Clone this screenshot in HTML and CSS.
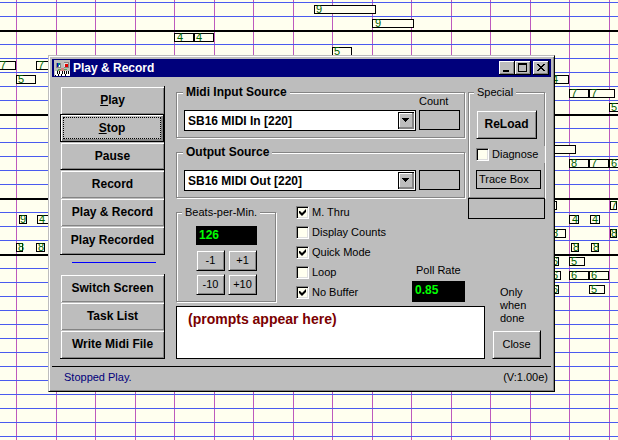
FILE: index.html
```html
<!DOCTYPE html>
<html lang="en">
<head>
    <meta charset="UTF-8">
    <meta name="viewport" content="width=device-width, initial-scale=1.0">
    <title>Play &amp; Record</title>
    <link rel="stylesheet" href="styles.css">
</head>
<body>
    <!-- piano roll -->
    <svg class="notes" aria-hidden="true">
        <g class="boxes">
            <rect x="314.5" y="5.5" width="61" height="8"/>
            <rect x="372.5" y="19.5" width="41" height="8"/>
            <rect x="174.5" y="33.5" width="19" height="8"/>
            <rect x="194.5" y="33.5" width="19" height="8"/>
            <rect x="332.5" y="47.5" width="19" height="8"/>
            <rect x="-4.5" y="61.5" width="20" height="8"/>
            <rect x="36.5" y="61.5" width="19" height="8"/>
            <rect x="16.5" y="75.5" width="19" height="8"/>
            <rect x="549.5" y="75.5" width="19" height="8"/>
            <rect x="569.5" y="89.5" width="19" height="8"/>
            <rect x="589.5" y="89.5" width="25" height="8"/>
            <rect x="609.5" y="103.5" width="19" height="8"/>
            <rect x="540.5" y="145.5" width="35" height="8"/>
            <rect x="569.5" y="159.5" width="19" height="8"/>
            <rect x="589.5" y="159.5" width="19" height="8"/>
            <rect x="609.5" y="159.5" width="19" height="8"/>
            <rect x="549.5" y="201.5" width="7" height="8"/>
            <rect x="610.5" y="201.5" width="6" height="8"/>
            <rect x="19.5" y="215.5" width="7" height="8"/>
            <rect x="37.5" y="215.5" width="19" height="8"/>
            <rect x="569.5" y="215.5" width="9" height="8"/>
            <rect x="590.5" y="215.5" width="9" height="8"/>
            <rect x="549.5" y="229.5" width="16" height="8"/>
            <rect x="610.5" y="229.5" width="6" height="8"/>
            <rect x="16.5" y="243.5" width="6" height="8"/>
            <rect x="36.5" y="243.5" width="8" height="8"/>
            <rect x="571.5" y="243.5" width="7" height="8"/>
            <rect x="591.5" y="243.5" width="7" height="8"/>
            <rect x="549.5" y="257.5" width="9" height="8"/>
            <rect x="569.5" y="257.5" width="15" height="8"/>
            <rect x="549.5" y="271.5" width="11" height="8"/>
            <rect x="569.5" y="271.5" width="19" height="8"/>
            <rect x="589.5" y="271.5" width="19" height="8"/>
            <rect x="549.5" y="285.5" width="9" height="8"/>
            <rect x="589.5" y="285.5" width="15" height="8"/>
        </g>
        <g class="digits">
            <text x="316" y="13">9</text>
            <text x="375" y="27">9</text>
            <text x="177" y="41">4</text>
            <text x="196" y="41">4</text>
            <text x="334" y="55">5</text>
            <text x="0" y="69">7</text>
            <text x="38" y="69">7</text>
            <text x="18" y="83">5</text>
            <text x="552" y="83">4</text>
            <text x="571" y="97">7</text>
            <text x="591" y="97">7</text>
            <text x="611" y="111">5</text>
            <text x="571" y="167">8</text>
            <text x="591" y="167">7</text>
            <text x="611" y="167">6</text>
            <text x="611" y="209">7</text>
            <text x="20" y="223">9</text>
            <text x="39" y="223">4</text>
            <text x="572" y="223">4</text>
            <text x="592" y="223">4</text>
            <text x="552" y="237">8</text>
            <text x="611" y="237">8</text>
            <text x="18" y="251">8</text>
            <text x="38" y="251">8</text>
            <text x="573" y="251">8</text>
            <text x="593" y="251">8</text>
            <text x="552" y="265">6</text>
            <text x="571" y="265">5</text>
            <text x="552" y="279">6</text>
            <text x="571" y="279">6</text>
            <text x="591" y="279">6</text>
            <text x="552" y="293">6</text>
            <text x="591" y="293">5</text>
        </g>
    </svg>

    <form class="window">
        <header class="titlebar">
            <svg class="app-icon" width="16" height="16" viewBox="0 0 16 16" shape-rendering="crispEdges" aria-hidden="true">
                <path fill="#bdbdbd" d="M0 0h16v16H0z"/>
                <path fill="#848484" d="M2 2h5v6H2zM9 2h6v6H9z"/>
                <path fill="#bdbdbd" d="M2 2h5v1H2zM9 2h1v6H9z"/>
                <path fill="#0000bd" d="M3 3h1v4H3z"/>
                <path fill="#008484" d="M4 3h2v3H4z"/>
                <path fill="#fff" d="M5 5h1v2H5z"/>
                <path fill="#dedede" d="M10 3h4v4h-4z"/>
                <path fill="#e00000" d="M11 4h3v3h-3z"/>
                <path fill="#5aa55a" d="M4 9h3v1H4zM10 9h3v1h-3zM3 10h2v1H3z"/>
                <path fill="#d08484" d="M7 8h3v2H7zM5 10h6v1H5z"/>
                <path fill="#fff" d="M1 11h15v5H1z"/>
                <path fill="#000" d="M3 11h1v3H3zM5 11h1v3H5zM8 11h1v3H8zM10 11h1v3h-1zM12 11h1v3h-1zM1 15h1v1H1zM4 14h1v2H4zM7 14h1v2H7zM11 14h1v2h-1zM14 11h1v3h-1z"/>
            </svg>
            <h1>Play &amp; Record</h1>
            <button type="button" class="caption" aria-label="Minimize">
                <svg width="12" height="10" shape-rendering="crispEdges"><path d="M2 7h6v2H2z"/></svg>
            </button>
            <button type="button" class="caption" aria-label="Maximize">
                <svg width="12" height="10" shape-rendering="crispEdges"><path fill-rule="evenodd" d="M1 0h9v9H1zM2 2v6h7V2z"/></svg>
            </button>
            <button type="button" class="caption close" aria-label="Close window">
                <svg width="12" height="10" shape-rendering="crispEdges"><path d="M2 1h2v1h1v1h2V2h1V1h2v1H9v1H8v1H7v1h1v1h1v1h1v1H8V7H7V6H5v1H4v1H2V7h1V6h1V5h1V4H4V3H3V2H2z"/></svg>
            </button>
        </header>

        <div class="client">
            <nav class="sidebar">
                <div class="stack">
                    <button type="button"><u>P</u>lay</button>
                    <button type="button" class="focused"><u>S</u>top</button>
                    <button type="button" class="last">Pause</button>
                    <button type="button">Record</button>
                    <button type="button">Play &amp; Record</button>
                    <button type="button">Play Recorded</button>
                </div>
                <hr>
                <div class="stack">
                    <button type="button">Switch Screen</button>
                    <button type="button">Task List</button>
                    <button type="button">Write Midi File</button>
                </div>
            </nav>

            <main class="main">
                <fieldset class="source">
                    <legend>Midi Input Source</legend>
                    <div class="source-row">
                        <select aria-label="Midi Input Source"><option>SB16 MIDI In [220]</option></select>
                        <div class="count">
                            <label for="inCount">Count</label>
                            <output id="inCount"></output>
                        </div>
                    </div>
                </fieldset>
                <fieldset class="source">
                    <legend>Output Source</legend>
                    <div class="source-row">
                        <select aria-label="Output Source"><option>SB16 MIDI Out [220]</option></select>
                        <div class="count"><output aria-label="Output count"></output></div>
                    </div>
                </fieldset>

                <div class="settings">
                    <fieldset class="beats">
                        <legend>Beats-per-Min.</legend>
                        <output class="led" aria-label="Beats per minute">126</output>
                        <div class="steps">
                            <button type="button">-1</button>
                            <button type="button">+1</button>
                            <button type="button">-10</button>
                            <button type="button">+10</button>
                        </div>
                    </fieldset>
                    <div class="options">
                        <label><input type="checkbox" checked>M. Thru</label>
                        <label><input type="checkbox">Display Counts</label>
                        <label><input type="checkbox" checked>Quick Mode</label>
                        <label><input type="checkbox">Loop</label>
                        <label><input type="checkbox" checked>No Buffer</label>
                    </div>
                    <div class="poll">
                        <label for="pollRate">Poll Rate</label>
                        <output class="led" id="pollRate">0.85</output>
                    </div>
                </div>

                <div class="prompts">(prompts appear here)</div>
            </main>

            <aside class="side">
                <fieldset class="special">
                    <legend>Special</legend>
                    <button type="button" class="reload">ReLoad</button>
                    <label class="diagnose"><input type="checkbox">Diagnose</label>
                    <div class="trace">Trace Box</div>
                </fieldset>
                <div class="blank"></div>
                <div class="done">
                    <p>Only<br>when<br>done</p>
                    <button type="button">Close</button>
                </div>
            </aside>
        </div>

        <footer class="status">
            <span class="message">Stopped Play.</span>
            <span>(V:1.00e)</span>
        </footer>
    </form>
</body>
</html>
```
FILE: styles.css
```css
* { box-sizing: border-box; }
body {
    margin: 0;
    min-height: 100vh;
    position: relative;
    overflow: hidden;
    font: 11px/13px "Liberation Sans", Arial, sans-serif;
    color: #000;
    background:
        linear-gradient(#000, #000) 0 30px / 100% 2px no-repeat,
        linear-gradient(#000, #000) 0 114px / 100% 2px no-repeat,
        linear-gradient(#000, #000) 0 198px / 100% 2px no-repeat,
        linear-gradient(#000, #000) 0 254px / 100% 2px no-repeat,
        repeating-linear-gradient(transparent 0 2px, #4a5aef 2px 3px, transparent 3px 14px),
        repeating-linear-gradient(90deg, transparent 0 16px, #bd5abd 16px 17px, transparent 17px 56px, #bd5abd 56px 57px, transparent 57px 79px),
        #ffffef;
}
h1, p, fieldset, legend { margin: 0; padding: 0; }
button { padding: 0; font: inherit; color: inherit; background: #bdbdbd; border: 0; border-radius: 0; }
output { display: block; }
svg { display: block; }

.notes { position: absolute; left: 0; top: 0; width: 100%; height: 100%; }
.boxes { fill: #ffffef; stroke: #000; }
.digits { fill: #006300; font: 11px "Liberation Sans", Arial, sans-serif; }

/* window frame */
.window {
    position: absolute;
    left: 48px;
    right: 63px;
    top: 55px;
    background: #bdbdbd;
    border: 1px solid;
    border-color: #bdbdbd #000 #000 #bdbdbd;
    box-shadow: inset 1px 1px #fff, inset -1px -1px #848484;
    padding: 3px;
}
.titlebar { display: flex; align-items: center; height: 18px; padding: 0 2px; background: #00007b; color: #fff; }
.titlebar h1 { flex: 1; margin-left: 3px; font-size: 12px; line-height: 18px; }
.caption {
    width: 16px;
    height: 14px;
    padding: 2px;
    color: #000;
    box-shadow: inset -1px -1px #000, inset 1px 1px #fff, inset -2px -2px #848484;
}
.caption.close { margin-left: 2px; }
.client { display: grid; grid-template-columns: 105px 1fr 77px; padding: 9px 6px 7px 8px; }

/* left buttons */
.stack { border: solid #000; border-width: 0 1px 1px 0; }
.stack button {
    display: block;
    width: 100%;
    height: 28px;
    font-size: 12px;
    font-weight: bold;
    border-left: 1px solid #bdbdbd;
    border-top: 1px solid #bdbdbd;
    box-shadow: inset 1px 1px #fff, inset -1px -1px #848484;
}
.stack .last { border-bottom: 1px solid #000; }
.stack .focused {
    border: 1px solid #000;
    outline: 1px dotted #000;
    outline-offset: -4px;
    box-shadow: inset 1px 1px #fff, inset -2px -2px #848484;
}
.sidebar hr { height: 1px; margin: 7px 9px 11px 12px; border: 0; background: #0000ff; }

/* group boxes */
fieldset { min-width: 0; border: 1px solid #848484; box-shadow: 1px 1px #fff, inset 1px 1px #fff; }
legend { margin-left: 6px; padding: 0 3px; line-height: 13px; background: #bdbdbd; white-space: nowrap; }
.main { display: flex; flex-direction: column; margin: 0 3px 0 11px; }
.source { margin-bottom: 8px; padding: 0 4px 6px 7px; }
.source legend { margin-left: -1px; font-size: 12px; font-weight: bold; }
.source-row { display: flex; align-items: flex-end; gap: 3px; min-height: 32px; }
.source select {
    flex: 1;
    min-width: 0;
    height: 21px;
    padding: 0 20px 0 3px;
    appearance: none;
    border: 1px solid #000;
    border-radius: 0;
    color: #000;
    font: bold 12px "Liberation Sans", Arial, sans-serif;
    background:
        linear-gradient(#000, #000) right 6px top 7px / 7px 1px no-repeat,
        linear-gradient(#000, #000) right 7px top 8px / 5px 1px no-repeat,
        linear-gradient(#000, #000) right 8px top 9px / 3px 1px no-repeat,
        linear-gradient(#000, #000) right 9px top 10px / 1px 1px no-repeat,
        linear-gradient(#bdbdbd, #bdbdbd) right 3px top 3px / 12px 13px no-repeat,
        linear-gradient(#fff, #fff) right 3px top 2px / 13px 14px no-repeat,
        linear-gradient(#848484, #848484) right 1px top 2px / 15px 16px no-repeat,
        linear-gradient(#000, #000) right 1px top 1px / 16px 17px no-repeat,
        #fff;
}
.count label { display: block; margin: -4px 0 2px; }
.count output { width: 41px; height: 20px; margin-bottom: 1px; border: 1px solid #000; }

.settings { display: flex; align-items: stretch; height: 96px; margin-bottom: 4px; }
.beats { width: 100px; padding: 0 18px 0 19px; }
.beats legend { margin-left: -14px; }
.led { padding-left: 3px; background: #000; color: #00ff00; font-size: 12px; font-weight: bold; }
.beats .led { height: 19px; margin-top: 7px; line-height: 18px; }
.steps { display: grid; grid-template-columns: 1fr 1fr; gap: 3px; margin-top: 5px; }
.steps button, .reload, .done button {
    border: 1px solid;
    border-color: #bdbdbd #000 #000 #bdbdbd;
    box-shadow: inset 1px 1px #fff, inset -1px -1px #848484;
}
.steps button { height: 21px; }

.options { display: flex; flex: 1; flex-direction: column; gap: 7px; margin-left: 20px; }
.options label, .diagnose { display: flex; align-items: center; gap: 3px; white-space: nowrap; }
input[type="checkbox"] {
    flex: none;
    width: 13px;
    height: 13px;
    margin: 0;
    appearance: none;
    background: #ffffef;
    border: 1px solid;
    border-color: #848484 #fff #fff #848484;
    box-shadow: inset 1px 1px #000, inset -1px -1px #dedede;
}
input[type="checkbox"]:checked::before {
    content: "";
    display: block;
    width: 7px;
    height: 7px;
    margin: 2px;
    background: #000;
    clip-path: polygon(0 2px, 1px 2px, 3px 4px, 7px 0, 7px 3px, 3px 7px, 0 4px);
}
.poll { display: flex; flex-direction: column; justify-content: flex-end; width: 53px; }
.poll label { margin: 0 0 4px 4px; white-space: nowrap; }
.poll .led { height: 21px; line-height: 18px; }

.prompts {
    flex: 1;
    margin-right: -20px;
    padding: 4px 11px;
    border: 1px solid #000;
    background: #fff;
    color: #7b0000;
    font-size: 14px;
    font-weight: bold;
    line-height: 16px;
}

/* right column */
.side { display: flex; flex-direction: column; }
.special { height: 112px; padding: 11px 0 0 7px; }
.special legend { margin-left: -2px; }
.reload { display: block; width: 61px; height: 29px; font-size: 12px; font-weight: bold; }
.diagnose { height: 17px; margin: 7px -1px 7px 0; background: #bdbdbd; }
.trace { width: 65px; height: 19px; padding-left: 2px; border: 1px solid #000; line-height: 16px; }
.blank { height: 21px; border: 1px solid #000; }
.done { margin: auto 4px 0 24px; }
.done p { margin: 0 0 5px 8px; }
.done button { display: block; width: 100%; height: 29px; }

.status { display: flex; justify-content: space-between; padding: 4px 3px 4px 12px; border-top: 1px solid #000; }
.message { color: #00007b; }
```
